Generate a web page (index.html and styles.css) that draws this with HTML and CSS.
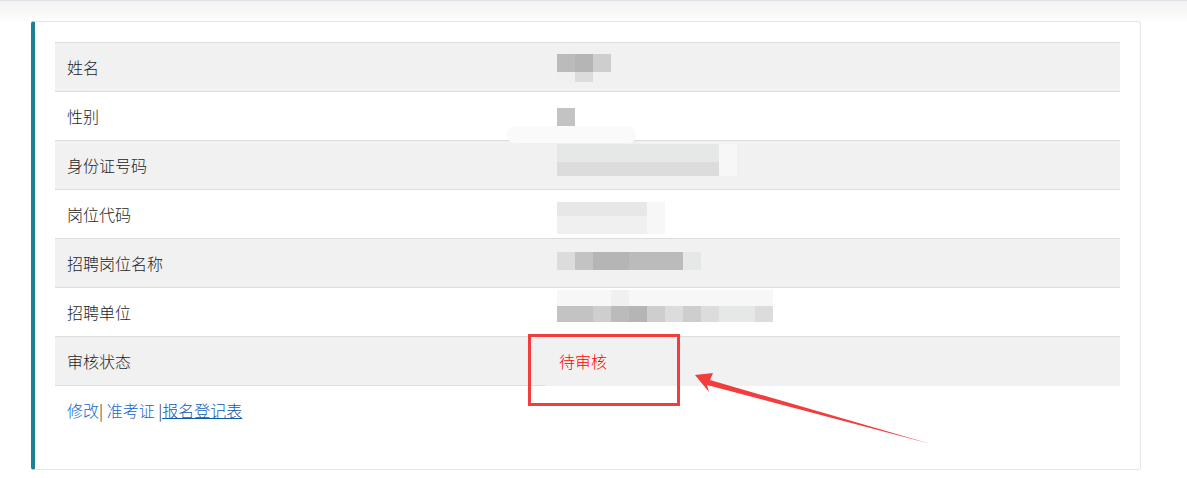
FILE: index.html
```html
<!DOCTYPE html>
<html lang="zh-CN">
<head>
    <meta charset="UTF-8">
    <meta name="viewport" content="width=device-width, initial-scale=1.0">
    <title>报名信息</title>
    <link rel="stylesheet" href="styles.css">
</head>
<body>
    <div class="top-bar"></div>

    <div class="panel">
        <table class="info-table">
            <tr class="odd">
                <td class="label">姓名</td>
                <td class="val">
                    <div class="mosaic m-name">
                        <div class="m-row h18"><span class="c4"></span><span class="c5"></span><span class="c2"></span></div>
                        <div class="m-row h10"><span class="cl"></span><span class="c1"></span></div>
                    </div>
                </td>
            </tr>
            <tr>
                <td class="label">性别</td>
                <td class="val smudge-cell">
                    <div class="mosaic m-sex">
                        <div class="m-row h18"><span class="c3"></span></div>
                    </div>
                    <div class="smudge"></div>
                </td>
            </tr>
            <tr class="odd">
                <td class="label">身份证号码</td>
                <td class="val">
                    <div class="mosaic m-id">
                        <div class="m-row h18"><span class="c0"></span><span class="c0"></span><span class="c0"></span><span class="c0"></span><span class="c0"></span><span class="c0"></span><span class="c0"></span><span class="c0"></span><span class="c0"></span><span class="cf"></span></div>
                        <div class="m-row h14"><span class="c1"></span><span class="c1"></span><span class="c1"></span><span class="c1"></span><span class="c1"></span><span class="c1"></span><span class="c1"></span><span class="c1"></span><span class="c1"></span><span class="cf"></span></div>
                    </div>
                </td>
            </tr>
            <tr>
                <td class="label">岗位代码</td>
                <td class="val">
                    <div class="mosaic m-code">
                        <div class="m-row h14"><span class="c0"></span><span class="c0"></span><span class="c0"></span><span class="c0"></span><span class="c0"></span><span class="cf"></span></div>
                        <div class="m-row h18"><span class="cl"></span><span class="cl"></span><span class="cl"></span><span class="cl"></span><span class="cl"></span><span class="cf"></span></div>
                    </div>
                </td>
            </tr>
            <tr class="odd">
                <td class="label">招聘岗位名称</td>
                <td class="val">
                    <div class="mosaic m-post">
                        <div class="m-row h18"><span class="c1"></span><span class="c3"></span><span class="c5"></span><span class="c5"></span><span class="c4"></span><span class="c4"></span><span class="c4"></span><span class="c0"></span></div>
                    </div>
                </td>
            </tr>
            <tr>
                <td class="label">招聘单位</td>
                <td class="val">
                    <div class="mosaic m-unit">
                        <div class="m-row h16"><span class="cf"></span><span class="cf"></span><span class="cf"></span><span class="cl"></span><span class="cf"></span><span class="cf"></span><span class="cf"></span><span class="cf"></span><span class="cf"></span><span class="cf"></span><span class="cf"></span><span class="cf"></span></div>
                        <div class="m-row h16"><span class="c3"></span><span class="c3"></span><span class="c2"></span><span class="c4"></span><span class="c5"></span><span class="c2"></span><span class="c1"></span><span class="c2"></span><span class="c1"></span><span class="c0"></span><span class="c0"></span><span class="c1"></span></div>
                    </div>
                </td>
            </tr>
            <tr class="odd last">
                <td class="label">审核状态</td>
                <td class="status-cell">
                    <span class="status">待审核</span>
                    <div class="mark-box"></div>
                    <svg class="mark-arrow" width="240" height="76" viewBox="0 0 240 76">
                        <polygon points="2,4 20,2 17,9 238,73 14,14 16,21" fill="#f33c3c"/>
                    </svg>
                </td>
            </tr>
        </table>

        <div class="actions">
            <a href="#" class="link">修改</a>| <a href="#" class="link">准考证</a> |<a href="#" class="link u">报名登记表</a>
        </div>
    </div>
</body>
</html>
```

FILE: styles.css
```css
/* 全局 */
body {
    margin: 0;
    font-family: "Noto Sans CJK SC", "Microsoft YaHei", sans-serif;
    font-size: 16px;
    font-weight: 300;
    color: #1e1e1e;
    background: #fff;
}

.top-bar {
    height: 21px;
    border-top: 1px solid #dde1e8;
    box-sizing: border-box;
    background: linear-gradient(#f3f3f4, #fdfdfd);
}

/* 卡片 */
.panel {
    margin-left: 31px;
    width: 1110px;
    box-sizing: border-box;
    border: 1px solid #e6e6e6;
    border-left: 4px solid #1e7f99;
    border-radius: 3px;
    padding: 20px 20px 49px 20px;
}

/* 信息表 */
.info-table {
    width: 100%;
    border-collapse: collapse;
}
.info-table tr {
    border-top: 1px solid #dddde0;
}
.info-table tr.odd {
    background: #f1f1f1;
}
.info-table td {
    height: 48px;
    padding: 0 12px;
    vertical-align: middle;
    line-height: 20px;
}
.info-table td.label {
    width: 466px;
}
.info-table tr.last td.label {
    border-bottom: 1px solid #dddde0;
}
.info-table td.val {
    vertical-align: top;
    position: relative;
}

/* 打码 */
.mosaic {
    display: flex;
    flex-direction: column;
}
.m-row {
    display: flex;
}
.m-row span {
    width: 18px;
}
.h10 { height: 10px; }
.h14 { height: 14px; }
.h16 { height: 16px; }
.h18 { height: 18px; }
.c0 { background: #e6e7e7; }
.c1 { background: #dcdcdc; }
.c2 { background: #cececf; }
.c3 { background: #c3c3c4; }
.c4 { background: #bbbbbc; }
.c5 { background: #b5b5b6; }
.cl { background: #f0f0f0; }
.cf { background: #f7f7f7; }

.m-name { margin-top: 11px; }
.m-sex { margin-top: 16px; }
.m-id { margin-top: 3px; }
.m-code { margin-top: 12px; }
.m-post { margin-top: 13px; }
.m-unit { margin-top: 2px; }

.smudge {
    position: absolute;
    left: -38px;
    top: 34px;
    width: 129px;
    height: 17px;
    border-radius: 8px;
    background: #fafafa;
}

/* 审核状态 */
.status-cell {
    position: relative;
}
.status {
    color: #f00;
    margin-left: 2px;
}
.mark-box {
    position: absolute;
    left: -17px;
    top: -3px;
    width: 152px;
    height: 72px;
    box-sizing: border-box;
    border: 3px solid #f33c3c;
}
.mark-arrow {
    position: absolute;
    left: 148px;
    top: 34px;
}

/* 操作链接 */
.actions {
    margin-top: 14px;
    padding-left: 12px;
    line-height: 20px;
    color: #222;
}
.link {
    color: #1566cc;
    text-decoration: none;
}
.link.u {
    color: #0c5ab0;
    text-decoration: underline;
}
```
